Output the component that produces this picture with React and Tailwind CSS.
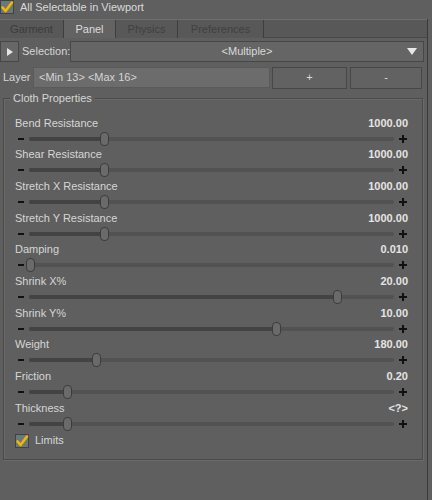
const rows = [
  { label: "Bend Resistance", value: "1000.00", pos: 103 },
  { label: "Shear Resistance", value: "1000.00", pos: 103 },
  { label: "Stretch X Resistance", value: "1000.00", pos: 103 },
  { label: "Stretch Y Resistance", value: "1000.00", pos: 103 },
  { label: "Damping", value: "0.010", pos: 29 },
  { label: "Shrink X%", value: "20.00", pos: 336 },
  { label: "Shrink Y%", value: "10.00", pos: 275 },
  { label: "Weight", value: "180.00", pos: 95 },
  { label: "Friction", value: "0.20", pos: 66 },
  { label: "Thickness", value: "<?>", pos: 66 },
];

function Check({ className = "" }) {
  return (
    <div
      className={
        "relative w-[14px] h-[14px] border border-[#3e4444] bg-[#6c7878] " + className
      }
    >
      <svg viewBox="0 0 14 14" className="absolute -left-px -top-px w-[14px] h-[14px]">
        <path
          d="M2.5 7.5 L5.5 11 L12 2.5"
          fill="none"
          stroke="#f2b800"
          strokeWidth="2.6"
          strokeLinecap="round"
          strokeLinejoin="round"
        />
      </svg>
    </div>
  );
}

function Slider({ label, value, pos }) {
  // pos is thumb x in page coords; track starts at x=28
  const left = pos - 28;
  return (
    <div className="h-[31.67px] flex flex-col">
      <div className="h-[16px] flex items-center justify-between pl-[11px] pr-[14px]">
        <span className="text-[#d6d6d6]">{label}</span>
        <span className="text-[#e4e4e4] font-bold">{value}</span>
      </div>
      <div className="h-[15.67px] flex items-center pl-[14px] pr-[15px]">
        <span className="w-[6px] h-[2px] bg-[#111]" />
        <div className="relative flex-1 h-[4px] mx-[5px] rounded-full bg-[#525252]">
          <div
            className="absolute left-0 top-0 h-[4px] rounded-full bg-[#434343]"
            style={{ width: left }}
          />
          <div
            className="absolute top-[-5px] w-[9px] h-[14px] rounded-[4px] border border-[#3c3c3c] bg-[#6a6a6a]"
            style={{ left: left - 4 }}
          />
        </div>
        <span className="relative w-[8px] h-[8px]">
          <span className="absolute left-0 top-[3px] w-[8px] h-[2px] bg-[#111]" />
          <span className="absolute left-[3px] top-0 w-[2px] h-[8px] bg-[#111]" />
        </span>
      </div>
    </div>
  );
}

export default function App() {
  return (
    <div
      className="w-[432px] h-[500px] bg-[#5f5f5f] text-[11px] overflow-hidden"
      style={{ fontFamily: '"Liberation Sans", Arial, sans-serif' }}
    >
      {/* top checkbox */}
      <div className="h-[19px] flex items-start gap-[6px]">
        <Check />
        <span className="text-[#dadada] leading-[14px]">All Selectable in Viewport</span>
      </div>

      <div className="w-[428px] h-[481px] border-r border-[#3a3a3a]">
        {/* tabs */}
        <div className="h-[19px] flex border-t border-[#6e6e6e] bg-[#585858]">
          <div className="w-[64px] flex items-center justify-center border-r border-[#3e3e3e] text-[#3c3c3c] bg-[#585858]">
            Garment
          </div>
          <div className="w-[52px] flex items-center justify-center border-r border-[#3e3e3e] text-[#dcdcdc] bg-[#636363]">
            Panel
          </div>
          <div className="w-[62px] flex items-center justify-center border-r border-[#3e3e3e] text-[#404040] bg-[#585858]">
            Physics
          </div>
          <div className="w-[86px] flex items-center justify-center border-r border-[#3e3e3e] text-[#404040] bg-[#585858]">
            Preferences
          </div>
          <div className="flex-1 border-b border-[#484848]" />
        </div>

        {/* selection row */}
        <div className="h-[23px] mt-[2px] flex items-center pr-[3px]">
          <div className="w-[19px] h-[21px] flex items-center justify-center bg-[#676767] border border-[#474747]">
            <svg viewBox="0 0 6 8" className="w-[6px] h-[8px]">
              <path d="M0 0 L6 4 L0 8 Z" fill="#e4e4e4" />
            </svg>
          </div>
          <span className="ml-[3px] w-[48px] text-[#d6d6d6]">Selection:</span>
          <div className="flex-1 h-[21px] relative flex items-center justify-center bg-[#656565] border border-[#474747] text-[#dadada]">
            &lt;Multiple&gt;
            <svg viewBox="0 0 10 7" className="absolute right-[6px] top-[6px] w-[10px] h-[7px]">
              <path d="M0 0 L10 0 L5 7 Z" fill="#e8e8e8" />
            </svg>
          </div>
        </div>

        {/* layer row */}
        <div className="h-[23px] mt-[3px] flex items-center pr-[5px]">
          <span className="ml-[3px] w-[30px] text-[#d6d6d6]">Layer</span>
          <div className="w-[237px] h-[21px] flex items-center pl-[5px] bg-[#6c6c6c] border border-[#5a5a5a] text-[#d4d4d4]">
            &lt;Min 13&gt; &lt;Max 16&gt;
          </div>
          <div className="ml-[2px] w-[75px] h-[22px] flex items-center justify-center bg-[#626262] border border-[#474747] text-[#dcdcdc]">
            +
          </div>
          <div className="ml-[3px] flex-1 h-[22px] flex items-center justify-center bg-[#626262] border border-[#474747] text-[#dcdcdc]">
            -
          </div>
        </div>

        {/* group box */}
        <div className="relative ml-[3px] mr-[4px] mt-[9px] h-[362px] border border-[#4a4a4a] shadow-[inset_1px_1px_0_#6a6a6a,1px_1px_0_#6a6a6a]">
          <span className="absolute left-[6px] top-[-8px] px-[3px] bg-[#5f5f5f] text-[#d6d6d6] leading-[14px]">
            Cloth Properties
          </span>
          <div className="pt-[16px]">
            {rows.map((r) => (
              <Slider key={r.label} {...r} />
            ))}
            <div className="h-[18px] flex items-center gap-[6px] pl-[11px]">
              <Check />
              <span className="text-[#d6d6d6]">Limits</span>
            </div>
          </div>
        </div>
      </div>
    </div>
  );
}
